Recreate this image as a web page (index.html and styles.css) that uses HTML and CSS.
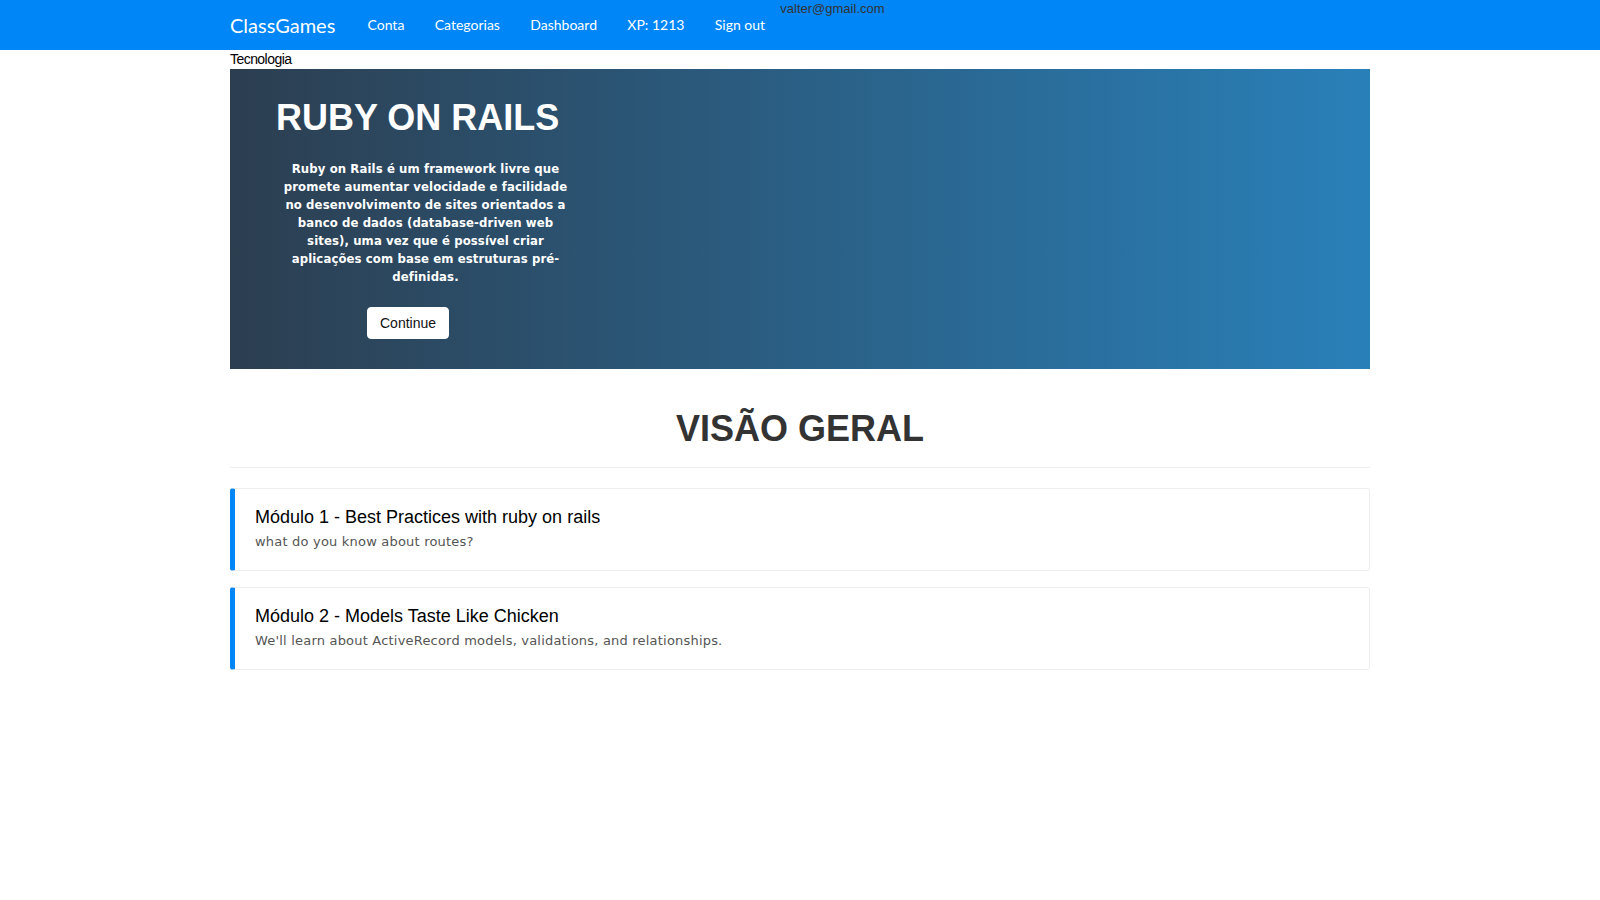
FILE: index.html
```html
<!DOCTYPE html>
<html lang="pt">
<head>
<meta charset="utf-8">
<title>ClassGames</title>
<link rel="stylesheet" href="styles.css">
</head>
<body>
<nav class="navbar">
  <div class="container navbar-inner">
    <a class="brand" href="#">ClassGames</a>
    <ul class="nav">
      <li><a href="#">Conta</a></li>
      <li><a href="#">Categorias</a></li>
      <li><a href="#">Dashboard</a></li>
      <li><a href="#">XP: 1213</a></li>
      <li><a href="#">Sign out</a></li>
    </ul>
    <span class="user-email">valter@gmail.com</span>
  </div>
</nav>
<main class="container">
  <div class="category">Tecnologia</div>
  <section class="hero">
    <h1 class="hero-title">RUBY ON RAILS</h1>
    <p class="hero-text">Ruby on Rails é um framework livre que promete aumentar velocidade e facilidade no desenvolvimento de sites orientados a banco de dados (database-driven web sites), uma vez que é possível criar aplicações com base em estruturas pré-definidas.</p>
    <div class="hero-actions"><a class="btn" href="#">Continue</a></div>
  </section>
  <div class="page-header">
    <h1>VISÃO GERAL</h1>
  </div>
  <div class="module">
    <h4>Módulo 1 - Best Practices with ruby on rails</h4>
    <p>what do you know about routes?</p>
  </div>
  <div class="module">
    <h4>Módulo 2 - Models Taste Like Chicken</h4>
    <p>We'll learn about ActiveRecord models, validations, and relationships.</p>
  </div>
</main>
</body>
</html>
```
FILE: styles.css
```css
* { box-sizing: border-box; }

body {
  margin: 0;
  font-family: "Liberation Sans", Arial, sans-serif;
  font-size: 14px;
  line-height: 1.42857;
  color: #333;
  background: #fff;
}

.container {
  width: 1140px;
  margin: 0 auto;
}

.navbar {
  background: #0086f7;
  height: 50px;
}

.navbar-inner {
  display: flex;
  align-items: flex-start;
}

.brand {
  font-family: Lato, "Liberation Sans", sans-serif;
  font-size: 20px;
  line-height: 20px;
  padding: 15px 17px 15px 0;
  color: #fff;
  text-decoration: none;
}

.nav {
  display: flex;
  list-style: none;
  margin: 0;
  padding: 0;
}

.nav a {
  display: block;
  padding: 15px 15.2px;
  font-family: Lato, "Liberation Sans", sans-serif;
  font-size: 14px;
  line-height: 20px;
  color: #fff;
  text-decoration: none;
}

.user-email {
  font-size: 13px;
  line-height: 18px;
  color: #333;
}

.category {
  font-size: 14px;
  line-height: 19px;
  letter-spacing: -0.55px;
  color: #000;
}

.hero {
  background: linear-gradient(to right, #2c3e50, #2980b9);
  padding: 29px 0 30px 46px;
}

.hero-title {
  margin: 0;
  font-size: 36px;
  line-height: 39.6px;
  font-weight: bold;
  color: #fff;
}

.hero-text {
  width: 296px;
  margin: 22px 0 0 1.5px;
  text-align: center;
  font-family: "DejaVu Sans", Verdana, sans-serif;
  font-stretch: condensed;
  font-weight: bold;
  font-size: 13px;
  line-height: 18px;
  letter-spacing: 0.1px;
  color: #fff;
}

.hero-actions {
  margin: 21px 0 0 91px;
}

.btn {
  display: inline-block;
  padding: 5px 12px;
  font-size: 14px;
  line-height: 20px;
  border: 1px solid #fff;
  border-radius: 4px;
  background: #fff;
  color: #111;
  text-decoration: none;
}

.page-header {
  margin: 40px 0 20px;
  padding-bottom: 9px;
  border-bottom: 1px solid #eee;
  text-align: center;
}

.page-header h1 {
  margin: 0 0 10px;
  font-size: 36px;
  line-height: 39.6px;
  font-weight: bold;
  color: #333;
}

.module {
  border: 1px solid #eee;
  border-left: 5px solid #0086f7;
  border-radius: 3px;
  padding: 19px 20px 20px;
  margin-bottom: 16px;
}

.module h4 {
  margin: 0 0 5px;
  font-size: 18px;
  line-height: 19.8px;
  font-weight: normal;
  color: #000;
}

.module p {
  margin: 0;
  font-family: "DejaVu Sans", Verdana, sans-serif;
  font-size: 13px;
  line-height: 17px;
  letter-spacing: 0.2px;
  color: #555;
}
```
